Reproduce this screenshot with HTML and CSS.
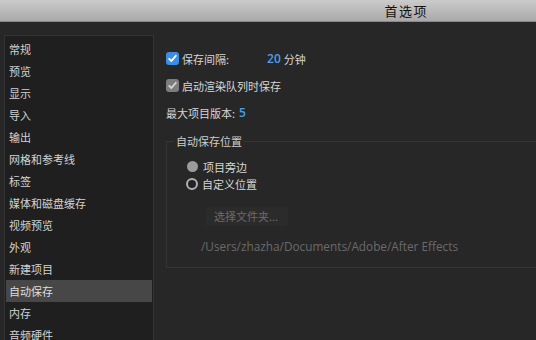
FILE: index.html
```html
<!DOCTYPE html>
<html lang="zh">
<head>
<meta charset="utf-8">
<link rel="stylesheet" href="styles.css">
</head>
<body>
<div class="titlebar"><span class="title">首选项</span></div>
<div class="main">
  <nav class="sidebar">
    <div class="item">常规</div>
    <div class="item">预览</div>
    <div class="item">显示</div>
    <div class="item">导入</div>
    <div class="item">输出</div>
    <div class="item">网格和参考线</div>
    <div class="item">标签</div>
    <div class="item">媒体和磁盘缓存</div>
    <div class="item">视频预览</div>
    <div class="item">外观</div>
    <div class="item">新建项目</div>
    <div class="item active">自动保存</div>
    <div class="item">内存</div>
    <div class="item">音频硬件</div>
  </nav>
  <section class="content">
    <div class="row">
      <span class="check blue"><svg viewBox="0 0 13 13" width="13" height="13"><path d="M3.2 6.8 L5.4 9 L9.8 3.8" fill="none" stroke="#fff" stroke-width="1.8" stroke-linecap="round" stroke-linejoin="round"/></svg></span>
      <span class="label">保存间隔:</span>
      <span class="value interval">20</span>
      <span class="label unit">分钟</span>
    </div>
    <div class="row">
      <span class="check gray"><svg viewBox="0 0 13 13" width="13" height="13"><path d="M3.2 6.8 L5.4 9 L9.8 3.8" fill="none" stroke="#d4d4d4" stroke-width="1.8" stroke-linecap="round" stroke-linejoin="round"/></svg></span>
      <span class="label">启动渲染队列时保存</span>
    </div>
    <div class="row">
      <span class="label">最大项目版本:</span>
      <span class="value versions">5</span>
    </div>
    <fieldset class="group">
      <legend class="legend">自动保存位置</legend>
      <div class="radio-row">
        <span class="radio filled"></span><span class="label">项目旁边</span>
      </div>
      <div class="radio-row">
        <span class="radio ring"></span><span class="label">自定义位置</span>
      </div>
      <div class="button-row"><span class="button">选择文件夹...</span></div>
      <div class="path">/Users/zhazha/Documents/Adobe/After Effects</div>
    </fieldset>
  </section>
</div>
</body>
</html>
```
FILE: styles.css
```css
html, body {
  margin: 0;
  padding: 0;
}
body {
  width: 536px;
  height: 340px;
  overflow: hidden;
  background: #272727;
  font-family: "Noto Sans CJK SC", "Noto Sans", sans-serif;
  font-size: 11px;
  color: #d4d4d4;
}
.titlebar {
  height: 21px;
  background: linear-gradient(#cbcbcb, #a9a9a9);
  border-bottom: 1px solid #8a8a8a;
  display: flex;
  justify-content: flex-end;
  align-items: center;
  padding-right: 108px;
}
.title {
  font-size: 13px;
  color: #111;
  letter-spacing: 1.5px;
}
.main {
  display: flex;
  padding-top: 13px;
  padding-left: 4px;
}
.sidebar {
  width: 146px;
  height: 310px;
  background: #1f1f1f;
  border: 1px solid #333;
  padding: 2px 1px 0 1px;
  display: flex;
  flex-direction: column;
}
.item {
  height: 22px;
  line-height: 22px;
  padding-left: 3px;
  color: #d2d2d2;
  flex: none;
}
.item.active {
  background: #474747;
  color: #dedede;
}
.content {
  flex: 1;
  padding-left: 12px;
  padding-top: 10px;
  display: flex;
  flex-direction: column;
}
.row {
  height: 27px;
  display: flex;
  align-items: center;
}
.check {
  width: 13px;
  height: 13px;
  border-radius: 3px;
  margin-right: 3px;
  display: flex;
}
.check.blue { background: #3c8de6; }
.check.gray { background: #7d7d7d; }
.label { color: #d6d6d6; }
.value { color: #4aa0ee; font-family: "Open Sans", sans-serif; font-size: 12px; font-weight: 600; }
.interval { margin-left: 38px; margin-right: 3px; }
.versions { margin-left: 4px; }
.group {
  margin: 7px 0 0 0;
  padding: 9px 0 0 19px;
  border: 1px solid #353535;
  border-right: none;
  height: 135px;
  box-sizing: border-box;
}
.legend {
  padding: 0 2px;
  margin-left: -12px;
  color: #cdcdcd;
}
.radio-row {
  height: 17px;
  display: flex;
  align-items: center;
}
.radio {
  width: 12px;
  height: 12px;
  border-radius: 50%;
  box-sizing: border-box;
  margin-right: 4px;
}
.radio.filled { background: #9b9b9b; width: 11px; height: 11px; margin: 0 5px 0 1px; }
.radio.ring { border: 2px solid #b0b0b0; background: #232323; }
.button-row {
  padding: 15px 0 0 20px;
}
.button {
  display: inline-block;
  height: 19px;
  line-height: 19px;
  padding: 0 10px 0 8px;
  background: #2b2b2b;
  color: #6c6c6c;
  border-radius: 2px;
}
.path {
  margin-top: 12px;
  padding-left: 15px;
  font-family: "Open Sans", sans-serif;
  font-size: 11.8px;
  line-height: 16px;
  color: #6a6a6a;
}
```
